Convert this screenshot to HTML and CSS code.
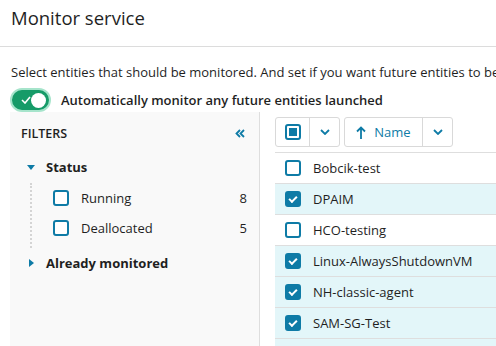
FILE: index.html
```html
<!DOCTYPE html>
<html lang="en">
<head>
    <meta charset="UTF-8">
    <title>Monitor service</title>
    <link rel="stylesheet" href="styles.css">
</head>
<body>
    <div class="head">
        <h1 class="title">Monitor service</h1>
    </div>

    <p class="desc">Select entities that should be monitored. And set if you want future entities to be monitored automatically.</p>

    <div class="auto">
        <span class="toggle">
            <svg class="tick" width="10" height="8" viewBox="0 0 10 8"><path d="M1 4l3 3 5-6" fill="none" stroke="#fff" stroke-width="1.6"/></svg>
            <span class="knob"></span>
        </span>
        <span class="auto-label">Automatically monitor any future entities launched</span>
    </div>

    <div class="main">
        <!-- 왼쪽 필터 -->
        <div class="filters">
            <div class="f-head">
                <span>FILTERS</span>
                <svg width="10" height="9" viewBox="0 0 10 9"><path d="M5 1L1.5 4.5 5 8M9 1L5.5 4.5 9 8" fill="none" stroke="#0e7ba6" stroke-width="1.8"/></svg>
            </div>

            <div class="group open">
                <span class="caret down"></span>
                <span class="g-name">Status</span>
            </div>
            <div class="items">
                <div class="item">
                    <span class="cb"></span>
                    <span class="i-name">Running</span>
                    <span class="count">8</span>
                </div>
                <div class="item">
                    <span class="cb"></span>
                    <span class="i-name">Deallocated</span>
                    <span class="count">5</span>
                </div>
            </div>

            <div class="group">
                <span class="caret right"></span>
                <span class="g-name">Already monitored</span>
            </div>
        </div>

        <!-- 오른쪽 목록 -->
        <div class="list">
            <div class="toolbar">
                <div class="btn-grp">
                    <span class="bpart sel"><span class="cb mixed"></span></span>
                    <span class="bpart chev"><svg width="10" height="6" viewBox="0 0 10 6"><path d="M1 1l4 4 4-4" fill="none" stroke="#0e7ba6" stroke-width="1.8"/></svg></span>
                </div>
                <div class="btn-grp">
                    <span class="bpart sort">
                        <svg width="10" height="13" viewBox="0 0 10 13"><path d="M5 13V2M1 5.5L5 1.5 9 5.5" fill="none" stroke="#0e7ba6" stroke-width="1.8"/></svg>
                        Name
                    </span>
                    <span class="bpart chev"><svg width="10" height="6" viewBox="0 0 10 6"><path d="M1 1l4 4 4-4" fill="none" stroke="#0e7ba6" stroke-width="1.8"/></svg></span>
                </div>
            </div>

            <div class="rows">
                <div class="row"><span class="cb"></span>Bobcik-test</div>
                <div class="row on"><span class="cb checked"></span>DPAIM</div>
                <div class="row"><span class="cb"></span>HCO-testing</div>
                <div class="row on"><span class="cb checked"></span>Linux-AlwaysShutdownVM</div>
                <div class="row on"><span class="cb checked"></span>NH-classic-agent</div>
                <div class="row on"><span class="cb checked"></span>SAM-SG-Test</div>
                <div class="row on"><span class="cb checked"></span>Test-VM-01</div>
            </div>
        </div>
    </div>
</body>
</html>
```

FILE: styles.css
```css
body {
    margin: 0;
    font-family: "Open Sans", "Liberation Sans", sans-serif;
    color: #1f1f1f;
    background: #fff;
    overflow: hidden;
    height: 346px;
}

.head {
    height: 46px;
    border-bottom: 1px solid #dcdcdc;
    padding: 0 11px;
}
.title {
    margin: 0;
    font-size: 18.5px;
    font-weight: 400;
    line-height: 36px;
}

.desc {
    margin: 16px 0 0 11px;
    font-size: 13px;
    line-height: 18px;
    white-space: nowrap;
}

.auto {
    display: flex;
    align-items: center;
    gap: 10px;
    margin: 7px 0 0 10px;
    height: 24px;
}
.toggle {
    box-sizing: border-box;
    width: 41px;
    height: 24px;
    border-radius: 12px;
    background: #169b68;
    border: 2px solid #a6e4cb;
    display: flex;
    align-items: center;
    justify-content: space-between;
    padding: 0 3px 0 9px;
}
.knob {
    width: 15px;
    height: 15px;
    border-radius: 50%;
    background: #fff;
}
.auto-label {
    font-size: 13px;
    font-weight: 600;
}

.main {
    display: flex;
    margin: 0 0 0 10px;
}

.filters {
    width: 250px;
    height: 240px;
    background: #f9f9f9;
    border-right: 1px solid #dedede;
    box-sizing: border-box;
    padding: 0 11px;
}
.f-head {
    display: flex;
    justify-content: space-between;
    align-items: center;
    height: 37px;
    padding: 3px 3px 0 0;
    font-size: 12.5px;
    font-weight: 600;
}

.group {
    display: flex;
    align-items: center;
    height: 28px;
    margin-top: 1px;
    font-size: 13px;
    font-weight: 700;
}
.caret {
    width: 0;
    height: 0;
}
.caret.down {
    border-left: 4px solid transparent;
    border-right: 4px solid transparent;
    border-top: 5px solid #0e7ba6;
    margin: 0 11px 0 6px;
}
.caret.right {
    border-top: 4px solid transparent;
    border-bottom: 4px solid transparent;
    border-left: 5px solid #0e7ba6;
    margin: 0 12px 0 8px;
}

.items {
    margin: 2px 0 0 9px;
    padding: 0 0 5px 21px;
    border-left: 2px dotted #d4d4d4;
}
.item {
    display: flex;
    align-items: center;
    height: 30px;
    font-size: 13px;
}
.item .cb {
    margin-right: 12px;
}
.i-name {
    flex: 1;
}
.count {
    padding-right: 1px;
}

.cb {
    box-sizing: border-box;
    width: 16px;
    height: 16px;
    border: 2px solid #0e7ba6;
    border-radius: 3px;
    background: #fff;
    flex: none;
    position: relative;
}
.cb.checked {
    background: #0e7ba6;
}
.cb.checked::after {
    content: "";
    position: absolute;
    left: 2px;
    top: 0;
    width: 6px;
    height: 3px;
    border-left: 2px solid #fff;
    border-bottom: 2px solid #fff;
    transform: translate(0, 3px) rotate(-45deg);
}
.cb.mixed::after {
    content: "";
    position: absolute;
    left: 2px;
    top: 2px;
    width: 8px;
    height: 8px;
    background: #0e7ba6;
}

.list {
    flex: 1;
    padding: 5px 0 0 15px;
}
.toolbar {
    display: flex;
    gap: 4px;
    height: 30px;
}
.btn-grp {
    display: flex;
    border: 1px solid #d9d9d9;
    border-radius: 3px;
    box-sizing: border-box;
    height: 30px;
}
.bpart {
    display: flex;
    align-items: center;
    justify-content: center;
}
.bpart + .bpart {
    border-left: 1px solid #d9d9d9;
}
.sel {
    width: 33px;
}
.chev {
    width: 29px;
}
.sort {
    width: 77px;
    gap: 8px;
    color: #0e7ba6;
    font-size: 13px;
}

.rows {
    margin-top: 5px;
    border-top: 1px solid #dedede;
}
.row {
    display: flex;
    align-items: center;
    height: 30px;
    border-bottom: 1px solid #dedede;
    padding-left: 10px;
    font-size: 13px;
}
.row .cb {
    margin-right: 12px;
}
.row.on {
    background: #e3f6f9;
}
```
